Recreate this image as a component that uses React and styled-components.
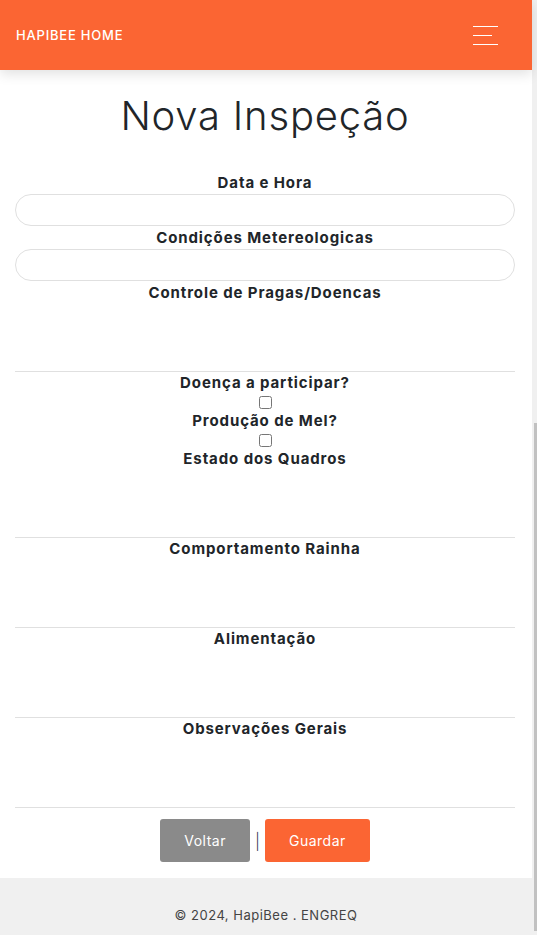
import React from 'react';
import styled, { createGlobalStyle } from 'styled-components';

const GlobalStyle = createGlobalStyle`
  body {
    margin: 0;
    font-family: Inter, "Open Sans", sans-serif;
    color: #212529;
    background: #fff;
  }
`;

const Page = styled.div`
  display: flex;
  height: 100vh;
  overflow: hidden;
`;

const Content = styled.div`
  flex: 1;
  min-width: 0;
  display: flex;
  flex-direction: column;
`;

/* page scrollbar as it shows in the screenshot */
const ScrollRail = styled.div`
  width: 5px;
  flex-shrink: 0;
  background: #f0f0f0;
  display: flex;
  flex-direction: column;
  justify-content: flex-end;
  align-items: flex-end;
  padding-bottom: 4px;
  box-sizing: border-box;
`;

const ScrollThumb = styled.div`
  width: 3px;
  height: 508px;
  background: #c1c1c1;
`;

const NavBar = styled.header`
  flex-shrink: 0;
  height: 70px;
  background: #fb6533;
  display: flex;
  align-items: center;
  justify-content: space-between;
  padding: 0 34px 0 16px;
  box-shadow: 0 4px 12px rgba(0, 0, 0, 0.12);
  position: relative;
  z-index: 1;
`;

const Brand = styled.a`
  color: #fff;
  font-size: 13px;
  font-weight: 500;
  text-decoration: none;
  letter-spacing: 0.8px;
`;

const Burger = styled.button`
  width: 25px;
  height: 19px;
  padding: 0;
  border: none;
  background: none;
  display: flex;
  flex-direction: column;
  justify-content: space-between;
  align-items: flex-start;
`;

const BurgerLine = styled.span`
  display: block;
  height: 1px;
  width: ${(p) => (p.$short ? '19px' : '25px')};
  background: #fff;
`;

const Main = styled.main`
  flex: 1;
  padding: 0 17px 0 15px;
  display: flex;
  flex-direction: column;
`;

const Title = styled.h1`
  margin: 22px 0 32px;
  text-align: center;
  font-size: 40px;
  font-weight: 300;
  line-height: 48px;
  letter-spacing: 0.8px;
  color: #212529;
`;

const Form = styled.form`
  display: flex;
  flex-direction: column;
  align-items: stretch;
`;

const Label = styled.label`
  display: block;
  text-align: center;
  font-size: 15px;
  font-weight: 700;
  line-height: 22px;
  letter-spacing: 0.9px;
  color: #212529;
`;

const Input = styled.input`
  box-sizing: border-box;
  height: 32px;
  width: 100%;
  border: 1px solid #e0e0e0;
  border-radius: 16px;
  padding: 0 14px;
  margin-bottom: 1px;
  outline: none;
`;

const TextArea = styled.textarea`
  box-sizing: border-box;
  display: block;
  width: 100%;
  height: 68px;
  border: none;
  border-bottom: 1px solid #e0e0e0;
  resize: none;
  outline: none;
  font-family: inherit;
`;

const CheckRow = styled.div`
  display: flex;
  justify-content: center;
  height: 16px;
  align-items: center;
`;

const Check = styled.input`
  margin: 0;
  width: 13px;
  height: 13px;
`;

const Actions = styled.div`
  display: flex;
  justify-content: center;
  align-items: center;
  gap: 5px;
  margin: 11px 0 16px;
`;

const Button = styled.button`
  height: 43px;
  padding: 0 24px;
  border: none;
  border-radius: 3px;
  color: #fff;
  font-family: inherit;
  font-size: 14px;
  letter-spacing: 0.5px;
  background: ${(p) => (p.$primary ? '#fb6533' : '#8a8a8a')};
`;

const Divider = styled.span`
  color: #3a3a5a;
  font-size: 16px;
  font-weight: 300;
`;

const Footer = styled.footer`
  flex-shrink: 0;
  background: #f0f0f0;
  height: 57px;
  display: flex;
  align-items: flex-end;
  justify-content: center;
  padding-bottom: 12px;
  box-sizing: border-box;
  font-size: 13px;
  letter-spacing: 0.5px;
  color: #444;
`;

function Field({ label }) {
  return (
    <>
      <Label>{label}</Label>
      <Input type="text" />
    </>
  );
}

function Area({ label }) {
  return (
    <>
      <Label>{label}</Label>
      <TextArea />
    </>
  );
}

function Toggle({ label }) {
  return (
    <>
      <Label>{label}</Label>
      <CheckRow>
        <Check type="checkbox" />
      </CheckRow>
    </>
  );
}

export default function App() {
  return (
    <Page>
      <GlobalStyle />
      <Content>
        <NavBar>
          <Brand href="#">HAPIBEE HOME</Brand>
          <Burger type="button" aria-label="menu">
            <BurgerLine />
            <BurgerLine $short />
            <BurgerLine />
          </Burger>
        </NavBar>
        <Main>
          <Title>Nova Inspeção</Title>
          <Form onSubmit={(e) => e.preventDefault()}>
            <Field label="Data e Hora" />
            <Field label="Condições Metereologicas" />
            <Area label="Controle de Pragas/Doencas" />
            <Toggle label="Doença a participar?" />
            <Toggle label="Produção de Mel?" />
            <Area label="Estado dos Quadros" />
            <Area label="Comportamento Rainha" />
            <Area label="Alimentação" />
            <Area label="Observações Gerais" />
            <Actions>
              <Button type="button">Voltar</Button>
              <Divider>|</Divider>
              <Button type="submit" $primary>Guardar</Button>
            </Actions>
          </Form>
        </Main>
        <Footer>© 2024, HapiBee . ENGREQ</Footer>
      </Content>
      <ScrollRail>
        <ScrollThumb />
      </ScrollRail>
    </Page>
  );
}
